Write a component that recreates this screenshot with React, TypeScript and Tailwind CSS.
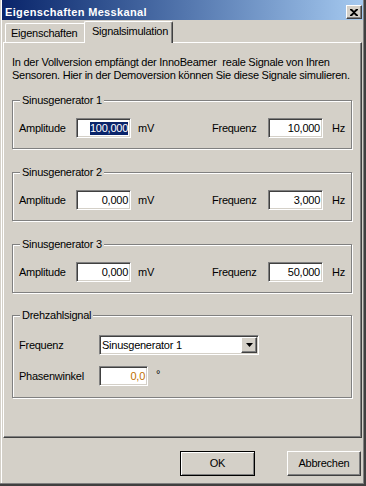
import React from 'react';

const raised =
  'border border-t-white border-l-white border-r-[#404040] border-b-[#404040] shadow-[inset_-1px_-1px_0_#808080] bg-[#d4d0c8]';
const sunken =
  'border border-t-[#808080] border-l-[#808080] border-r-white border-b-white shadow-[inset_1px_1px_0_#404040,inset_-1px_-1px_0_#d4d0c8] bg-white';

function NumField({ value, width = 'w-[55px]', selected = false, color = 'text-black' }: { value: string; width?: string; selected?: boolean; color?: string }) {
  return (
    <div className={`${sunken} ${width} h-[20px] flex items-center justify-end pr-[2px] leading-[13px] ${color}`}>
      {selected ? <span className="bg-[#0a246a] text-white">{value}</span> : <span>{value}</span>}
    </div>
  );
}

function Group({ title, className = '', children }: { title: string; className?: string; children: React.ReactNode }) {
  return (
    <fieldset
      className={`w-[340px] border border-[#808080] shadow-[1px_1px_0_#fff,inset_1px_1px_0_#fff] ${className}`}
    >
      <legend className="ml-[7px] px-[2px] bg-[#d4d0c8] leading-[13px]">{title}</legend>
      {children}
    </fieldset>
  );
}

function SignalRow({ amp, freq, selected = false }: { amp: string; freq: string; selected?: boolean }) {
  return (
    <div className="flex items-center pl-[6px] pt-[11px] pb-[10px]">
      <span className="w-[57px]">Amplitude</span>
      <NumField value={amp} selected={selected} />
      <span className="ml-[7px] w-[74px]">mV</span>
      <span className="w-[56px]">Frequenz</span>
      <NumField value={freq} />
      <span className="ml-[9px]">Hz</span>
    </div>
  );
}

export default function App() {
  return (
    <div className="w-[366px] h-[486px] bg-[#d4d0c8] text-[11px] tracking-[-0.25px] text-black font-['Liberation_Sans',Arial,sans-serif] border-r-2 border-b-2 border-[#404040] shadow-[inset_-1px_-1px_0_#808080,inset_1px_0_0_#d4d0c8,inset_2px_0_0_#fff] flex flex-col">
      {/* Title bar */}
      <div className="ml-[2px] mr-[1px] h-[20px] pt-[4px] flex items-center justify-between bg-linear-to-r from-[#0a246a] to-[#a6caf0]">
        <span className="pl-[3px] font-bold text-white leading-[13px] tracking-[0.35px]">Eigenschaften Messkanal</span>
        <div className={`${raised} w-[16px] h-[14px] mr-[1px] flex items-center justify-center`}>
          <svg width="8" height="7" viewBox="0 0 8 7">
            <path d="M0 0h2l2 2 2-2h2v1L5 3.5 8 6v1H6L4 5 2 7H0V6l3-2.5L0 1z" fill="#000" />
          </svg>
        </div>
      </div>

      {/* Tabs */}
      <div className="h-[22px] flex items-end pl-[5px]">
        <div className="w-[79px] h-[19px] border-t border-l border-white rounded-tl-[2px] flex items-center pl-[5px] leading-[13px]">
          Eigenschaften
        </div>
        <div className="relative z-10 -mb-px w-[89px] h-[22px] bg-[#d4d0c8] border-t border-l border-white border-r border-r-[#404040] shadow-[inset_-1px_0_0_#808080] rounded-t-[2px] flex items-center pl-[7px] pb-[2px] leading-[13px]">
          Signalsimulation
        </div>
      </div>

      {/* Tab panel */}
      <div className="ml-[3px] w-[359px] h-[396px] border-t border-l border-white border-r border-b border-r-[#404040] border-b-[#404040] shadow-[inset_-1px_-1px_0_#808080] pl-[8px] pt-[13px]">
        <p className="leading-[13px] whitespace-nowrap">
          In der Vollversion empfängt der InnoBeamer&nbsp; reale Signale von Ihren
          <br />
          Sensoren. Hier in der Demoversion können Sie diese Signale simulieren.
        </p>

        <Group title="Sinusgenerator 1" className="mt-[12px]">
          <SignalRow amp="100,000" freq="10,000" selected />
        </Group>
        <Group title="Sinusgenerator 2" className="mt-[17px]">
          <SignalRow amp="0,000" freq="3,000" />
        </Group>
        <Group title="Sinusgenerator 3" className="mt-[17px]">
          <SignalRow amp="0,000" freq="50,000" />
        </Group>

        <Group title="Drehzahlsignal" className="mt-[16px]">
          <div className="flex flex-col pl-[6px] pt-[13px] pb-[11px] gap-[11px]">
            <div className="flex items-center">
              <span className="w-[80px]">Frequenz</span>
              <div className={`${sunken} w-[160px] h-[20px] flex items-center`}>
                <span className="flex-1 pl-[2px] leading-[13px]">Sinusgenerator 1</span>
                <div className={`${raised} w-[16px] h-[16px] mr-[1px] flex items-center justify-center`}>
                  <svg width="7" height="4" viewBox="0 0 7 4">
                    <path d="M0 0h7L3.5 4z" fill="#000" />
                  </svg>
                </div>
              </div>
            </div>
            <div className="flex items-center">
              <span className="w-[80px]">Phasenwinkel</span>
              <NumField value="0,0" width="w-[49px]" color="text-[#c07000]" />
              <span className="ml-[8px] -mt-[4px]">°</span>
            </div>
          </div>
        </Group>
      </div>

      {/* Buttons */}
      <div className="flex justify-end gap-[32px] pt-[13px] pr-[3px]">
        <button className="w-[75px] h-[25px] border border-black bg-[#d4d0c8] shadow-[inset_1px_1px_0_#fff,inset_-1px_-1px_0_#808080] leading-[13px]">
          OK
        </button>
        <button className={`${raised} w-[74px] h-[25px] leading-[13px]`}>Abbrechen</button>
      </div>
    </div>
  );
}
